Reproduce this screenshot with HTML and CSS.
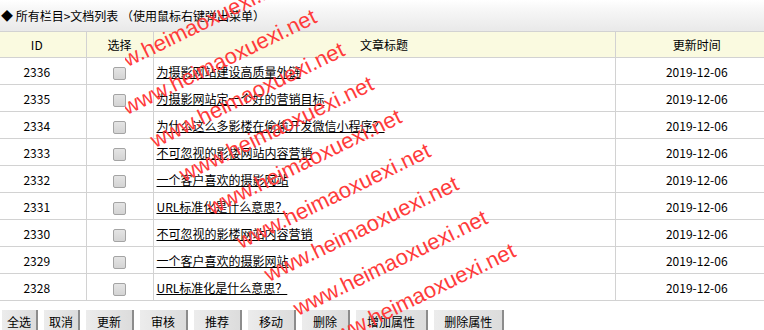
FILE: index.html
```html
<!DOCTYPE html>
<html lang="zh-CN">

<head>
    <meta charset="UTF-8">
    <title>文档列表</title>
    <link rel="stylesheet" href="styles.css">
</head>

<body>
    <div class="topbar">◆ 所有栏目&gt;文档列表 （使用鼠标右键弹出菜单）</div>

    <table class="list">
        <tr class="head">
            <th class="col-id">ID</th>
            <th class="col-sel">选择</th>
            <th class="col-title">文章标题</th>
            <th class="col-date">更新时间</th>
        </tr>
        <tr>
            <td class="col-id">2336</td>
            <td class="col-sel"><input type="checkbox" class="chk"></td>
            <td class="col-title"><a href="#">为摄影网站建设高质量外链</a></td>
            <td class="col-date">2019-12-06</td>
        </tr>
        <tr>
            <td class="col-id">2335</td>
            <td class="col-sel"><input type="checkbox" class="chk"></td>
            <td class="col-title"><a href="#">为摄影网站定一个好的营销目标</a></td>
            <td class="col-date">2019-12-06</td>
        </tr>
        <tr>
            <td class="col-id">2334</td>
            <td class="col-sel"><input type="checkbox" class="chk"></td>
            <td class="col-title"><a href="#">为什么这么多影楼在偷偷开发微信小程序？</a></td>
            <td class="col-date">2019-12-06</td>
        </tr>
        <tr>
            <td class="col-id">2333</td>
            <td class="col-sel"><input type="checkbox" class="chk"></td>
            <td class="col-title"><a href="#">不可忽视的影楼网站内容营销</a></td>
            <td class="col-date">2019-12-06</td>
        </tr>
        <tr>
            <td class="col-id">2332</td>
            <td class="col-sel"><input type="checkbox" class="chk"></td>
            <td class="col-title"><a href="#">一个客户喜欢的摄影网站</a></td>
            <td class="col-date">2019-12-06</td>
        </tr>
        <tr>
            <td class="col-id">2331</td>
            <td class="col-sel"><input type="checkbox" class="chk"></td>
            <td class="col-title"><a href="#">URL标准化是什么意思？</a></td>
            <td class="col-date">2019-12-06</td>
        </tr>
        <tr>
            <td class="col-id">2330</td>
            <td class="col-sel"><input type="checkbox" class="chk"></td>
            <td class="col-title"><a href="#">不可忽视的影楼网站内容营销</a></td>
            <td class="col-date">2019-12-06</td>
        </tr>
        <tr>
            <td class="col-id">2329</td>
            <td class="col-sel"><input type="checkbox" class="chk"></td>
            <td class="col-title"><a href="#">一个客户喜欢的摄影网站</a></td>
            <td class="col-date">2019-12-06</td>
        </tr>
        <tr>
            <td class="col-id">2328</td>
            <td class="col-sel"><input type="checkbox" class="chk"></td>
            <td class="col-title"><a href="#">URL标准化是什么意思？</a></td>
            <td class="col-date">2019-12-06</td>
        </tr>
    </table>

    <div class="toolbar">
        <button class="btn btn-sm">全选</button>
        <button class="btn btn-sm">取消</button>
        <button class="btn">更新</button>
        <button class="btn">审核</button>
        <button class="btn">推荐</button>
        <button class="btn">移动</button>
        <button class="btn">删除</button>
        <button class="btn">增加属性</button>
        <button class="btn btn-last">删除属性</button>
    </div>

    <!-- 水印 -->
    <div class="watermark">
        <span class="wm" style="left:-34px;top:65px">www.heimaoxuexi.net</span>
        <span class="wm" style="left:-6px;top:99px">www.heimaoxuexi.net</span>
        <span class="wm" style="left:22px;top:132px">www.heimaoxuexi.net</span>
        <span class="wm" style="left:51px;top:166px">www.heimaoxuexi.net</span>
        <span class="wm" style="left:79px;top:199px">www.heimaoxuexi.net</span>
        <span class="wm" style="left:108px;top:233px">www.heimaoxuexi.net</span>
        <span class="wm" style="left:136px;top:266px">www.heimaoxuexi.net</span>
        <span class="wm" style="left:165px;top:300px">www.heimaoxuexi.net</span>
        <span class="wm" style="left:193px;top:333px">www.heimaoxuexi.net</span>
    </div>
</body>

</html>
```

FILE: styles.css
```css
body {
    margin: 0;
    font-family: "Noto Sans CJK SC", "Liberation Sans", sans-serif;
    font-size: 12px;
    color: #000000;
    background: #ffffff;
    overflow: hidden;
}

.topbar {
    height: 31px;
    line-height: 31px;
    padding-left: 1px;
    background: linear-gradient(#ffffff, #f7f7f7 30%, #e9e9e9);
    white-space: nowrap;
}

.list {
    width: 100%;
    border-collapse: collapse;
    table-layout: fixed;
}

.list th,
.list td {
    border: 1px solid #d2d2d2;
    padding: 0;
    text-align: center;
    font-weight: normal;
    white-space: nowrap;
}

.list th {
    height: 25px;
    background: #fafae0;
}

.list td {
    height: 26px;
}

.list tr > :first-child {
    border-left: none;
}

.list tr > :last-child {
    border-right: none;
}

.col-id {
    width: 86px;
    padding-right: 12px !important;
    box-sizing: border-box;
}

.col-sel {
    width: 66px;
}

.col-title {
    width: 461px;
}

.list td.col-title {
    text-align: left;
    padding-left: 3px;
}

.col-date {
    padding-left: 14px !important;
}

.col-title a {
    color: #000000;
    text-decoration: underline;
}

.chk {
    appearance: none;
    -webkit-appearance: none;
    width: 13px;
    height: 13px;
    margin: 0;
    vertical-align: middle;
    border: 1px solid #a4a4a4;
    border-radius: 2px;
    background: linear-gradient(#e4e4e4, #d4d4d4);
}

.toolbar {
    display: flex;
    gap: 6px;
    padding: 9px 0 0 2px;
}

.btn {
    height: 22px;
    padding: 0 11px;
    font-family: inherit;
    font-size: 12px;
    color: #000000;
    border: none;
    border-right: 2px solid #8c8c8c;
    border-radius: 0;
    background: linear-gradient(90deg, #ececec, #dcdcdc);
}

.btn-sm {
    padding: 0 5px;
}

.btn-last {
    padding: 0 10px;
}

/* 水印层，左侧裁掉 */
.watermark {
    position: absolute;
    left: 125px;
    top: 0;
    width: 639px;
    height: 330px;
    overflow: hidden;
    pointer-events: none;
}

.wm {
    position: absolute;
    font-family: "Liberation Sans", sans-serif;
    font-size: 22px;
    line-height: 22px;
    color: #ff3b3b;
    white-space: nowrap;
    transform-origin: 0 0;
    transform: rotate(-26deg);
}
```
